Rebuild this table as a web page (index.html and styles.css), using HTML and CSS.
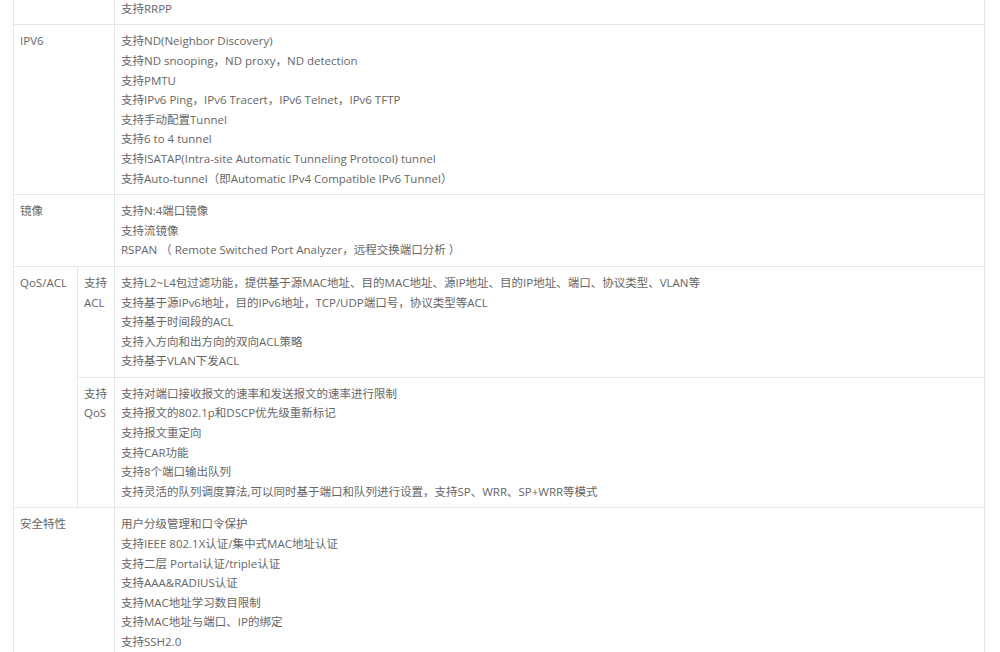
FILE: index.html
```html
<!DOCTYPE html>
<html lang="zh-CN">
<head>
    <meta charset="UTF-8">
    <title>产品规格</title>
    <link rel="stylesheet" href="styles.css">
</head>
<body>
    <div class="spec">
        <table class="spec-table">
            <colgroup>
                <col class="c-name">
                <col class="c-sub">
                <col>
            </colgroup>
            <tr>
                <td colspan="2">二层环网</td>
                <td>
                    <p>支持STP/RSTP/MSTP</p>
                    <p>支持ERPS</p>
                    <p>支持SEP</p>
                    <p>支持RRPP</p>
                </td>
            </tr>
            <tr>
                <td colspan="2">IPV6</td>
                <td>
                    <p>支持ND(Neighbor Discovery)</p>
                    <p>支持ND snooping，ND proxy，ND detection</p>
                    <p>支持PMTU</p>
                    <p>支持IPv6 Ping，IPv6 Tracert，IPv6 Telnet，IPv6 TFTP</p>
                    <p>支持手动配置Tunnel</p>
                    <p>支持6 to 4 tunnel</p>
                    <p>支持ISATAP(Intra-site Automatic Tunneling Protocol) tunnel</p>
                    <p>支持Auto-tunnel（即Automatic IPv4 Compatible IPv6 Tunnel）</p>
                </td>
            </tr>
            <tr>
                <td colspan="2">镜像</td>
                <td>
                    <p>支持N:4端口镜像</p>
                    <p>支持流镜像</p>
                    <p>RSPAN （ Remote Switched Port Analyzer，远程交换端口分析 ）</p>
                </td>
            </tr>
            <tr>
                <td rowspan="2">QoS/ACL</td>
                <td>支持<br>ACL</td>
                <td>
                    <p>支持L2~L4包过滤功能，提供基于源MAC地址、目的MAC地址、源IP地址、目的IP地址、端口、协议类型、VLAN等</p>
                    <p>支持基于源IPv6地址，目的IPv6地址，TCP/UDP端口号，协议类型等ACL</p>
                    <p>支持基于时间段的ACL</p>
                    <p>支持入方向和出方向的双向ACL策略</p>
                    <p>支持基于VLAN下发ACL</p>
                </td>
            </tr>
            <tr>
                <td>支持<br>QoS</td>
                <td>
                    <p>支持对端口接收报文的速率和发送报文的速率进行限制</p>
                    <p>支持报文的802.1p和DSCP优先级重新标记</p>
                    <p>支持报文重定向</p>
                    <p>支持CAR功能</p>
                    <p>支持8个端口输出队列</p>
                    <p>支持灵活的队列调度算法,可以同时基于端口和队列进行设置，支持SP、WRR、SP+WRR等模式</p>
                </td>
            </tr>
            <tr>
                <td colspan="2">安全特性</td>
                <td>
                    <p>用户分级管理和口令保护</p>
                    <p>支持IEEE 802.1X认证/集中式MAC地址认证</p>
                    <p>支持二层 Portal认证/triple认证</p>
                    <p>支持AAA&amp;RADIUS认证</p>
                    <p>支持MAC地址学习数目限制</p>
                    <p>支持MAC地址与端口、IP的绑定</p>
                    <p>支持SSH2.0</p>
                </td>
            </tr>
        </table>
    </div>
</body>
</html>
```

FILE: styles.css
```css
body {
    margin: 0;
    background: #fff;
    font-family: "Open Sans", "Noto Sans CJK SC", sans-serif;
    font-size: 11.5px;
    color: #666;
}
.spec {
    padding: 0 15px 0 13px;
    margin-top: -67px;
}
.spec-table {
    width: 100%;
    border-collapse: collapse;
    table-layout: fixed;
}
.c-name {
    width: 64px;
}
.c-sub {
    width: 37px;
}
.spec-table td {
    border: 1px solid #e6e6e6;
    padding: 6px;
    vertical-align: top;
    line-height: 19.6px;
}
.spec-table p {
    margin: 0;
}
```
